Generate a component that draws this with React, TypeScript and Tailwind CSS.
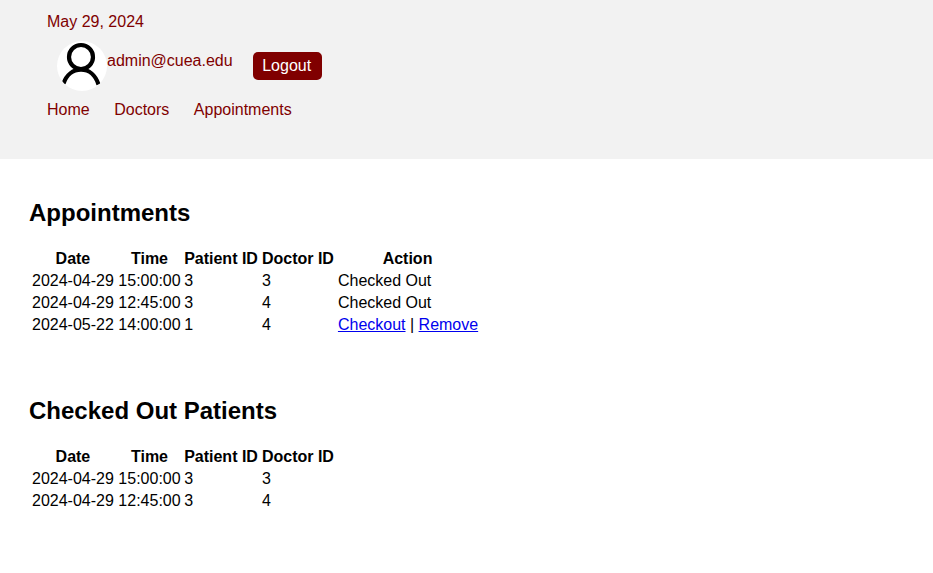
const headCell = 'p-px text-center font-bold';

type Row = { date: string; time: string; patient: string; doctor: string; done?: boolean };

const checkedOut: Row[] = [
  { date: '2024-04-29', time: '15:00:00', patient: '3', doctor: '3', done: true },
  { date: '2024-04-29', time: '12:45:00', patient: '3', doctor: '4', done: true },
];
const appointments: Row[] = [
  ...checkedOut,
  { date: '2024-05-22', time: '14:00:00', patient: '1', doctor: '4' },
];

function Table({ rows, action }: { rows: Row[]; action?: boolean }) {
  return (
    <table className="border-separate border-spacing-[2px] text-[16px] leading-[18px] whitespace-nowrap">
      <thead>
        <tr>
          <th className={headCell}>Date</th>
          <th className="py-px pr-[0.5px] pl-[1.5px] text-center font-bold">Time</th>
          <th className={headCell}>Patient ID</th>
          <th className={headCell}>Doctor ID</th>
          {action && <th className="py-px pr-[2px] pl-px text-center font-bold">Action</th>}
        </tr>
      </thead>
      <tbody>
        {rows.map((r) => (
          <tr key={r.date + r.time}>
            <td className="p-px">{r.date}</td>
            <td className="py-px pr-[0.5px] pl-[1.5px]">{r.time}</td>
            <td className="p-px">{r.patient}</td>
            <td className="p-px">{r.doctor}</td>
            {action && (
              <td className="p-px">
                {r.done ? (
                  'Checked Out'
                ) : (
                  <>
                    <a href="#" className="text-[#0000ee] underline">Checkout</a> |{' '}
                    <a href="#" className="text-[#0000ee] underline">Remove</a>
                  </>
                )}
              </td>
            )}
          </tr>
        ))}
      </tbody>
    </table>
  );
}

export default function App() {
  return (
    <div className="min-h-[573px] bg-white font-['Liberation_Sans',Arial,sans-serif] text-[16px] leading-[18px] text-black">
      <header className="h-[159px] bg-[#f2f2f2] pt-[13px] pl-[47px] text-[#800000]">
        <p>May 29, 2024</p>
        <div className="mt-[10px] flex h-[50px] items-start pl-[10px]">
          <div className="h-[50px] w-[50px] overflow-hidden rounded-full bg-white">
            <svg viewBox="0 0 50 50" className="h-full w-full" fill="none" stroke="#000" strokeWidth="4.2">
              <circle cx="24" cy="16" r="12" />
              <path d="M6.500 42.500C9.500 34 16 28.700 24 28.700S38.500 34 41.500 43.500" />
            </svg>
          </div>
          <span className="mt-[11px]">admin@cuea.edu</span>
          <button className="mt-[11px] ml-5 h-7 w-[69px] rounded-[5px] bg-[#800000] pr-px text-white">Logout</button>
        </div>
        <nav className="mt-[10px] flex gap-[24.5px]">
          <a href="#">Home</a>
          <a href="#">Doctors</a>
          <a href="#">Appointments</a>
        </nav>
      </header>
      <main className="pl-[29px]">
        <section className="pt-10">
          <h2 className="mb-5 text-[24px] leading-[28px] font-bold">Appointments</h2>
          <Table rows={appointments} action />
        </section>
        <section className="pt-[60px]">
          <h2 className="mb-5 text-[24px] leading-[28px] font-bold">Checked Out Patients</h2>
          <Table rows={checkedOut} />
        </section>
      </main>
    </div>
  );
}
